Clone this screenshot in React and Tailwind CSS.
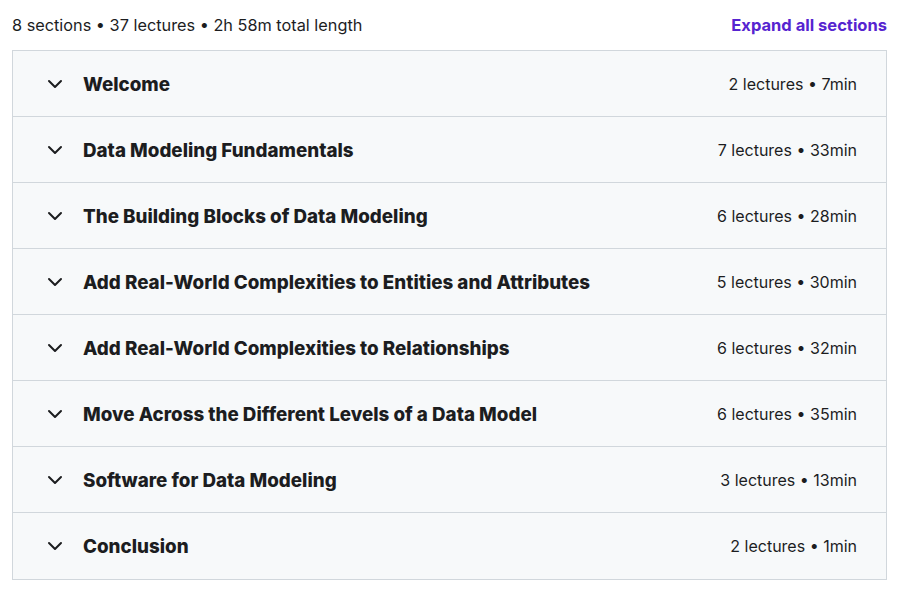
import { ChevronDown } from 'lucide-react';

const sections = [
  { title: 'Welcome', lectures: 2, length: '7min' },
  { title: 'Data Modeling Fundamentals', lectures: 7, length: '33min' },
  { title: 'The Building Blocks of Data Modeling', lectures: 6, length: '28min' },
  { title: 'Add Real-World Complexities to Entities and Attributes', lectures: 5, length: '30min' },
  { title: 'Add Real-World Complexities to Relationships', lectures: 6, length: '32min' },
  { title: 'Move Across the Different Levels of a Data Model', lectures: 6, length: '35min' },
  { title: 'Software for Data Modeling', lectures: 3, length: '13min' },
  { title: 'Conclusion', lectures: 2, length: '1min' },
];

const SectionRow = ({ section, last }) => (
  <div
    className={`flex items-center h-[66px] pl-[30px] pr-[29px] bg-[#f7f9fa] ${
      last ? '' : 'border-b border-[#d1d7dc]'
    }`}
  >
    <ChevronDown className="w-6 h-6 text-[#1c1d1f] mr-[16px]" strokeWidth={2} />
    <span className="flex-1 text-[18.8px] leading-[24px] font-extrabold text-[#1c1d1f] pt-[2px]">{section.title}</span>
    <span className="text-[16px] text-[#1c1d1f]">
      {section.lectures} lectures • {section.length}
    </span>
  </div>
);

export default function App() {
  return (
    <div className="w-[900px] h-[589px] bg-white pl-[12px] pr-[13px] pt-[13px] font-['Inter',sans-serif]">
      <div className="flex items-center justify-between h-[24px] mb-[13px]">
        <span className="text-[16.3px] text-[#1c1d1f]">
          8 sections • 37 lectures • 2h 58m total length
        </span>
        <button className="text-[16.5px] font-bold text-[#5624d0]">Expand all sections</button>
      </div>
      <div className="border border-[#d1d7dc]">
        {sections.map((s, i) => (
          <SectionRow key={s.title} section={s} last={i === sections.length - 1} />
        ))}
      </div>
    </div>
  );
}
